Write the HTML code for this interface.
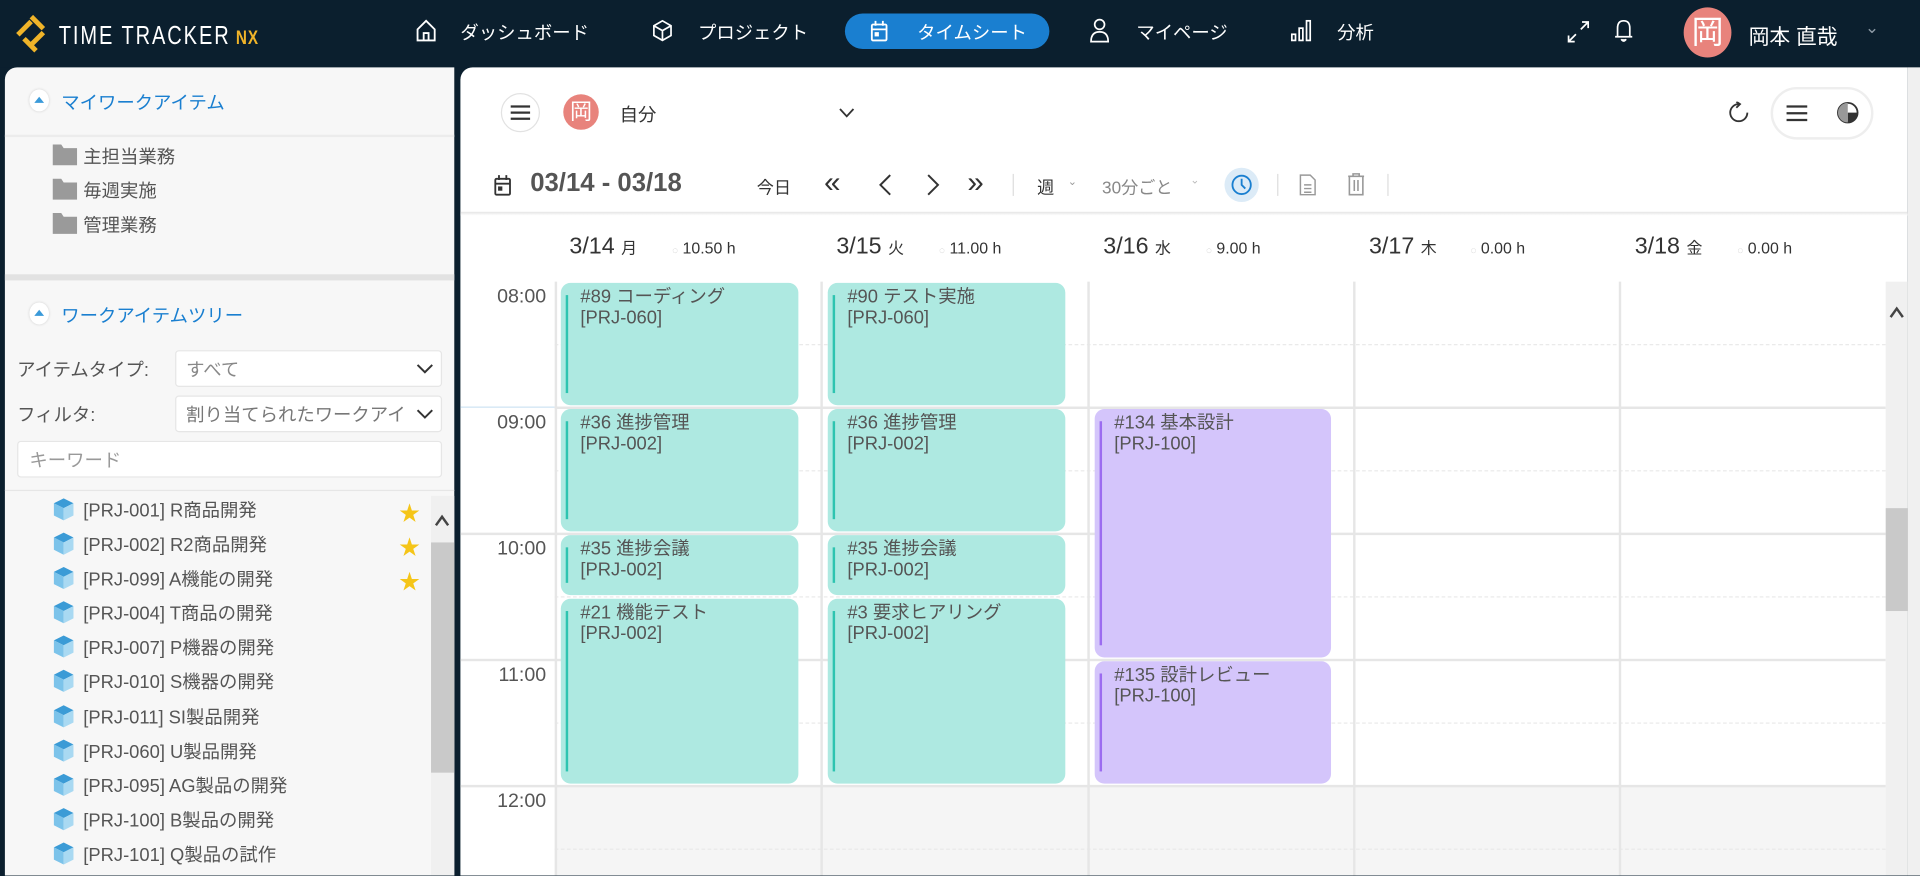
<!DOCTYPE html>
<html><head><meta charset="utf-8">
<style>
*{box-sizing:border-box;margin:0;padding:0}
html,body{width:1920px;height:856px;overflow:hidden;background:#0b1f2e}
#s{position:absolute;left:0;top:0;width:1568px;height:712px;transform:scale(1.22449);transform-origin:0 0;font-family:"Liberation Sans","Noto Sans CJK JP",sans-serif;color:#555;font-size:15px}
.a{position:absolute;white-space:nowrap}
.nav{color:#fff;font-size:15px;top:16px}
.line{position:absolute;background:#e6e6e6}
.dash{position:absolute;border-top:1px dashed #e8e8e8;height:0}
.ev{position:absolute;background:#aee9e1;border-radius:8px;font-size:15px;color:#555;line-height:17px;padding:3px 0 0 16px}
.ev:before{content:"";position:absolute;left:4px;top:10px;bottom:10px;width:2px;background:#2ec4b0}
.ev.p{background:#d4c5fb}.ev.p:before{background:#9b6cf0}
.tl{position:absolute;left:390px;width:56px;text-align:right;font-size:16px;color:#555}
.ti{position:absolute;left:43px;font-size:15px;color:#555}
.cube{display:inline-block;width:18px;height:20px;vertical-align:-4px;margin-right:7px}
.star{position:absolute;left:326px;color:#f5c518;font-size:17px}
</style></head><body>
<div id="s">
<div class="a" style="left:0;top:0;width:1568px;height:55px;background:#0b1f2e"></div>
<svg class="a" style="left:12px;top:12px" width="34" height="34" viewBox="0 0 34 34"><g stroke="#f0b429" stroke-width="4" stroke-linecap="square"><line x1="15" y1="3" x2="22" y2="10"/><line x1="4" y1="15" x2="12" y2="7"/><line x1="22" y1="16" x2="14" y2="24"/><line x1="9" y1="21" x2="16" y2="28"/></g></svg>
<div class="a" style="left:48px;top:18px;color:#fff;font-size:21px;letter-spacing:2px;transform:scaleX(.78);transform-origin:0 0;font-weight:400">TIME TRACKER<span style="color:#f0b429;font-size:16px;font-weight:bold;letter-spacing:1px"> NX</span></div>
<svg class="a" style="left:339px;top:15px" width="18" height="20" viewBox="0 0 18 20" fill="none" stroke="#fff" stroke-width="1.5"><path d="M2 9 L9 2 L16 9 V18 H2 Z M7 18 V12 H11 V18"/></svg>
<div class="a nav" style="left:376px">ダッシュボード</div>
<svg class="a" style="left:532px;top:15px" width="18" height="20" viewBox="0 0 18 20" fill="none" stroke="#fff" stroke-width="1.4"><path d="M9 2 L16 6 V14 L9 18 L2 14 V6 Z M2 6 L9 10 L16 6 M9 10 V18"/></svg>
<div class="a nav" style="left:570px">プロジェクト</div>
<div class="a" style="left:690px;top:11px;width:167px;height:29px;background:#1a7fd0;border-radius:15px"></div>
<svg class="a" style="left:710px;top:16px" width="16" height="19" viewBox="0 0 16 19" fill="none" stroke="#fff" stroke-width="1.5"><rect x="2" y="4" width="12" height="13" rx="1"/><path d="M5 1V5M11 1V5M2 8H14"/><rect x="5" y="11" width="2" height="2" fill="#fff"/></svg>
<div class="a nav" style="left:749px">タイムシート</div>
<svg class="a" style="left:889px;top:14px" width="18" height="22" viewBox="0 0 18 22" fill="none" stroke="#fff" stroke-width="1.4"><circle cx="9" cy="6" r="4"/><path d="M2 20 Q2 12 9 12 Q16 12 16 20 Z"/></svg>
<div class="a nav" style="left:928px">マイページ</div>
<svg class="a" style="left:1054px;top:15px" width="18" height="20" viewBox="0 0 18 20" fill="none" stroke="#fff" stroke-width="1.4"><rect x="1" y="13" width="3" height="5"/><rect x="7" y="8" width="3" height="10"/><rect x="13" y="2" width="3" height="16"/></svg>
<div class="a nav" style="left:1092px">分析</div>
<svg class="a" style="left:1279px;top:16px" width="20" height="20" viewBox="0 0 20 20" fill="none" stroke="#fff" stroke-width="1.4"><path d="M12 8 L18 2 M13 2H18V7 M8 12 L2 18 M2 13V18H7"/></svg>
<svg class="a" style="left:1317px;top:14px" width="18" height="22" viewBox="0 0 18 22" fill="none" stroke="#fff" stroke-width="1.4"><path d="M4 16 V9 Q4 3 9 3 Q14 3 14 9 V16 H16 H2 Z"/><path d="M7 18 Q9 21 11 18" fill="#fff"/></svg>
<div class="a" style="left:1375px;top:6px;width:39px;height:41px;border-radius:50%;background:#e8837c;color:#fff;font-size:26px;text-align:center;line-height:41px">岡</div>
<div class="a" style="left:1428px;top:16px;color:#fff;font-size:17px">岡本 直哉</div>
<div class="a" style="left:1523px;top:14px;color:#8a97a3;font-size:14px">⌄</div>

<div class="a" style="left:4px;top:55px;width:367px;height:660px;background:#f7f7f7;border-radius:10px 0 0 0"></div>
<div class="a" style="left:24px;top:73px;width:16px;height:18px;border-radius:50%;background:#fff;box-shadow:0 0 2px #ccc"></div>
<div class="a" style="left:28px;top:79px;width:0;height:0;border-left:4px solid transparent;border-right:4px solid transparent;border-bottom:5px solid #3a9ad9"></div>
<div class="a" style="left:50px;top:73px;color:#1a7fd0;font-size:15px">マイワークアイテム</div>
<div class="a" style="left:4px;top:110px;width:367px;height:2px;background:#ececec"></div>
<svg class="a" style="left:43px;top:118px" width="20" height="80"><g fill="#9a9a9a"><path d="M0 0H7L9 3H20V17H0Z"/><path d="M0 28H7L9 31H20V45H0Z"/><path d="M0 56H7L9 59H20V73H0Z"/></g></svg>
<div class="a" style="left:68px;top:117px">主担当業務</div>
<div class="a" style="left:68px;top:145px">毎週実施</div>
<div class="a" style="left:68px;top:173px">管理業務</div>
<div class="a" style="left:4px;top:224px;width:367px;height:5px;background:#e2e2e2"></div>
<div class="a" style="left:24px;top:247px;width:16px;height:18px;border-radius:50%;background:#fff;box-shadow:0 0 2px #ccc"></div>
<div class="a" style="left:28px;top:253px;width:0;height:0;border-left:4px solid transparent;border-right:4px solid transparent;border-bottom:5px solid #3a9ad9"></div>
<div class="a" style="left:50px;top:247px;color:#1a7fd0;font-size:15px">ワークアイテムツリー</div>
<div class="a" style="left:14px;top:291px">アイテムタイプ:</div>
<div class="a" style="left:143px;top:286px;width:218px;height:30px;background:#fff;border:1px solid #e6e6e6;border-radius:3px"></div>
<div class="a" style="left:152px;top:291px;color:#888">すべて</div>
<svg class="a" style="left:340px;top:296px" width="14" height="10"><path d="M1 2L7 8L13 2" stroke="#333" stroke-width="1.6" fill="none"/></svg>
<div class="a" style="left:14px;top:328px">フィルタ:</div>
<div class="a" style="left:143px;top:323px;width:218px;height:30px;background:#fff;border:1px solid #e6e6e6;border-radius:3px"></div>
<div class="a" style="left:152px;top:328px;color:#777;width:180px;overflow:hidden">割り当てられたワークアイ</div>
<svg class="a" style="left:340px;top:333px" width="14" height="10"><path d="M1 2L7 8L13 2" stroke="#333" stroke-width="1.6" fill="none"/></svg>
<div class="a" style="left:14px;top:360px;width:347px;height:30px;background:#fff;border:1px solid #e6e6e6;border-radius:3px"></div>
<div class="a" style="left:24px;top:365px;color:#999">キーワード</div>
<div class="a" style="left:4px;top:400px;width:367px;height:1px;background:#e6e6e6"></div>
<svg width="0" height="0" style="position:absolute"><defs><symbol id="cb" viewBox="0 0 18 20"><path d="M9 1L17 5L9 9L1 5Z" fill="#3b9bd6"/><path d="M1 5L9 9V19L1 15Z" fill="#7cc3ea"/><path d="M17 5L9 9V19L17 15Z" fill="#a9d9f2"/></symbol></defs></svg>
<div class="ti" style="top:406px"><svg class="cube"><use href="#cb"/></svg>[PRJ-001] R商品開発</div>
<div class="ti" style="top:434px"><svg class="cube"><use href="#cb"/></svg>[PRJ-002] R2商品開発</div>
<div class="ti" style="top:462px"><svg class="cube"><use href="#cb"/></svg>[PRJ-099] A機能の開発</div>
<div class="ti" style="top:490px"><svg class="cube"><use href="#cb"/></svg>[PRJ-004] T商品の開発</div>
<div class="ti" style="top:518px"><svg class="cube"><use href="#cb"/></svg>[PRJ-007] P機器の開発</div>
<div class="ti" style="top:546px"><svg class="cube"><use href="#cb"/></svg>[PRJ-010] S機器の開発</div>
<div class="ti" style="top:575px"><svg class="cube"><use href="#cb"/></svg>[PRJ-011] SI製品開発</div>
<div class="ti" style="top:603px"><svg class="cube"><use href="#cb"/></svg>[PRJ-060] U製品開発</div>
<div class="ti" style="top:631px"><svg class="cube"><use href="#cb"/></svg>[PRJ-095] AG製品の開発</div>
<div class="ti" style="top:659px"><svg class="cube"><use href="#cb"/></svg>[PRJ-100] B製品の開発</div>
<div class="ti" style="top:687px"><svg class="cube"><use href="#cb"/></svg>[PRJ-101] Q製品の試作</div>
<div class="star" style="top:405px">★</div><div class="star" style="top:433px">★</div><div class="star" style="top:461px">★</div>
<div class="a" style="left:352px;top:405px;width:19px;height:310px;background:#f0f0f0"></div>
<svg class="a" style="left:354px;top:419px" width="14" height="12"><path d="M2 10L7 3L12 10" stroke="#444" stroke-width="2" fill="none"/></svg>
<div class="a" style="left:352px;top:443px;width:19px;height:188px;background:#c9c9c9"></div>

<div class="a" style="left:376px;top:55px;width:1182px;height:660px;background:#fff;border-radius:10px 0 0 0"></div>
<div class="a" style="left:1558px;top:55px;width:10px;height:660px;background:#f0f0f0"></div>
<div class="a" style="left:409px;top:76px;width:32px;height:32px;border-radius:50%;border:1px solid #e2e2e2"></div>
<svg class="a" style="left:417px;top:85px" width="16" height="14"><path d="M0 2H16M0 7H16M0 12H16" stroke="#333" stroke-width="1.8"/></svg>
<div class="a" style="left:460px;top:77px;width:29px;height:29px;border-radius:50%;background:#e8837c;color:#fff;font-size:18px;text-align:center;line-height:29px">岡</div>
<div class="a" style="left:506px;top:83px;color:#333">自分</div>
<svg class="a" style="left:685px;top:88px" width="13" height="9"><path d="M1 1L6.5 7L12 1" stroke="#333" stroke-width="1.5" fill="none"/></svg>
<svg class="a" style="left:1411px;top:83px" width="18" height="18" viewBox="0 0 18 18" fill="none" stroke="#333" stroke-width="1.5"><path d="M9 2A7 7 0 1 0 16 9"/><path d="M7 0L10 2L7 5" /></svg>
<div class="a" style="left:1446px;top:71px;width:84px;height:43px;border-radius:22px;border:2px solid #eee"></div>
<svg class="a" style="left:1459px;top:85px" width="17" height="15"><path d="M0 2H17M0 7.5H17M0 13H17" stroke="#333" stroke-width="1.8"/></svg>
<svg class="a" style="left:1499px;top:82px" width="20" height="20" viewBox="0 0 20 20"><circle cx="10" cy="10" r="8" fill="#fff" stroke="#333" stroke-width="1.5"/><path d="M10 10H18A8 8 0 0 1 10 18Z" fill="#333"/><path d="M10 10V18A8 8 0 0 1 2 10 8 8 0 0 1 10 2Z" fill="#999"/></svg>

<svg class="a" style="left:402px;top:142px" width="17" height="19" viewBox="0 0 16 19" fill="none" stroke="#333" stroke-width="1.5"><rect x="2" y="4" width="12" height="13" rx="1"/><path d="M5 1V5M11 1V5M2 8H14"/><rect x="5" y="11" width="2" height="2" fill="#333"/></svg>
<div class="a" style="left:433px;top:138px;font-size:21px;font-weight:bold;color:#555">03/14 - 03/18</div>
<div class="a" style="left:618px;top:143px;color:#333;font-size:14px">今日</div>
<div class="a" style="left:673px;top:136px;color:#333;font-size:24px">«</div>
<svg class="a" style="left:716px;top:141px" width="14" height="20"><path d="M11 2L3 10L11 18" stroke="#333" stroke-width="1.6" fill="none"/></svg>
<svg class="a" style="left:755px;top:141px" width="14" height="20"><path d="M3 2L11 10L3 18" stroke="#333" stroke-width="1.6" fill="none"/></svg>
<div class="a" style="left:790px;top:136px;color:#333;font-size:24px">»</div>
<div class="a" style="left:827px;top:142px;width:1px;height:18px;background:#ddd"></div>
<div class="a" style="left:847px;top:143px;color:#333;font-size:14px">週</div>
<div class="a" style="left:872px;top:143px;color:#999;font-size:9px">⌄</div>
<div class="a" style="left:900px;top:143px;color:#888;font-size:14px">30分ごと</div>
<div class="a" style="left:972px;top:142px;color:#bbb;font-size:9px">⌄</div>
<div class="a" style="left:1000px;top:137px;width:28px;height:28px;border-radius:50%;background:#dcebf7"></div>
<svg class="a" style="left:1005px;top:142px" width="18" height="18" viewBox="0 0 18 18" fill="none" stroke="#1a7fd0" stroke-width="1.5"><circle cx="9" cy="9" r="7.5"/><path d="M9 4V9L12 12"/></svg>
<div class="a" style="left:1043px;top:142px;width:1px;height:18px;background:#ddd"></div>
<svg class="a" style="left:1061px;top:142px" width="14" height="18" viewBox="0 0 14 18" fill="none" stroke="#999" stroke-width="1.2"><path d="M1 1H9L13 5V17H1Z M4 9H10M4 12H10M4 15H10"/></svg>
<svg class="a" style="left:1100px;top:141px" width="15" height="19" viewBox="0 0 15 19" fill="none" stroke="#999" stroke-width="1.3"><path d="M1 3H14M5 3V1H10V3M2 3V18H13V3M6 6V15M9 6V15"/></svg>
<div class="a" style="left:1133px;top:142px;width:1px;height:18px;background:#ddd"></div>
<div class="a" style="left:376px;top:173px;width:1182px;height:3px;background:linear-gradient(#e4e4e4,#fff)"></div>

<div class="a" style="left:465px;top:191px;font-size:19px;color:#333">3/14 <span style="font-size:13px">月</span></div><div class="a" style="left:549px;top:195px;font-size:13px;color:#333"><span style="color:#bbb;font-size:8px">◌</span> 10.50 h</div>
<div class="a" style="left:683px;top:191px;font-size:19px;color:#333">3/15 <span style="font-size:13px">火</span></div><div class="a" style="left:767px;top:195px;font-size:13px;color:#333"><span style="color:#bbb;font-size:8px">◌</span> 11.00 h</div>
<div class="a" style="left:901px;top:191px;font-size:19px;color:#333">3/16 <span style="font-size:13px">水</span></div><div class="a" style="left:985px;top:195px;font-size:13px;color:#333"><span style="color:#bbb;font-size:8px">◌</span> 9.00 h</div>
<div class="a" style="left:1118px;top:191px;font-size:19px;color:#333">3/17 <span style="font-size:13px">木</span></div><div class="a" style="left:1201px;top:195px;font-size:13px;color:#333"><span style="color:#bbb;font-size:8px">◌</span> 0.00 h</div>
<div class="a" style="left:1335px;top:191px;font-size:19px;color:#333">3/18 <span style="font-size:13px">金</span></div><div class="a" style="left:1419px;top:195px;font-size:13px;color:#333"><span style="color:#bbb;font-size:8px">◌</span> 0.00 h</div>

<div class="a" style="left:453px;top:641px;width:1087px;height:74px;background:#f5f5f5"></div>
<div class="dash" style="left:453px;top:281px;width:1087px"></div>
<div class="dash" style="left:453px;top:384px;width:1087px"></div>
<div class="dash" style="left:453px;top:487px;width:1087px"></div>
<div class="dash" style="left:453px;top:590px;width:1087px"></div>
<div class="dash" style="left:453px;top:693px;width:1087px"></div>
<div class="line" style="left:376px;top:332px;width:77px;height:1px;background:#cfe3f3"></div>
<div class="line" style="left:453px;top:332px;width:1087px;height:2px"></div>
<div class="line" style="left:376px;top:435px;width:1164px;height:2px"></div>
<div class="line" style="left:376px;top:538px;width:1164px;height:2px"></div>
<div class="line" style="left:376px;top:641px;width:1164px;height:2px"></div>
<div class="line" style="left:453px;top:230px;width:2px;height:485px"></div>
<div class="line" style="left:670px;top:230px;width:2px;height:485px"></div>
<div class="line" style="left:888px;top:230px;width:2px;height:485px"></div>
<div class="line" style="left:1105px;top:230px;width:2px;height:485px"></div>
<div class="line" style="left:1322px;top:230px;width:2px;height:485px"></div>
<div class="tl" style="top:234px">08:00</div>
<div class="tl" style="top:337px">09:00</div>
<div class="tl" style="top:440px">10:00</div>
<div class="tl" style="top:543px">11:00</div>
<div class="tl" style="top:646px">12:00</div>
<div class="a" style="left:1540px;top:230px;width:18px;height:485px;background:#f0f0f0"></div>
<svg class="a" style="left:1542px;top:249px" width="14" height="12"><path d="M2 10L7 3L12 10" stroke="#444" stroke-width="2" fill="none"/></svg>
<div class="a" style="left:1540px;top:415px;width:18px;height:84px;background:#c9c9c9"></div>

<div class="ev" style="left:458px;top:231px;width:194px;height:100px">#89 コーディング<br>[PRJ-060]</div>
<div class="ev" style="left:458px;top:334px;width:194px;height:100px">#36 進捗管理<br>[PRJ-002]</div>
<div class="ev" style="left:458px;top:437px;width:194px;height:49px">#35 進捗会議<br>[PRJ-002]</div>
<div class="ev" style="left:458px;top:489px;width:194px;height:151px">#21 機能テスト<br>[PRJ-002]</div>
<div class="ev" style="left:676px;top:231px;width:194px;height:100px">#90 テスト実施<br>[PRJ-060]</div>
<div class="ev" style="left:676px;top:334px;width:194px;height:100px">#36 進捗管理<br>[PRJ-002]</div>
<div class="ev" style="left:676px;top:437px;width:194px;height:49px">#35 進捗会議<br>[PRJ-002]</div>
<div class="ev" style="left:676px;top:489px;width:194px;height:151px">#3 要求ヒアリング<br>[PRJ-002]</div>
<div class="ev p" style="left:894px;top:334px;width:193px;height:203px">#134 基本設計<br>[PRJ-100]</div>
<div class="ev p" style="left:894px;top:540px;width:193px;height:100px">#135 設計レビュー<br>[PRJ-100]</div>
</div>
</body></html>
